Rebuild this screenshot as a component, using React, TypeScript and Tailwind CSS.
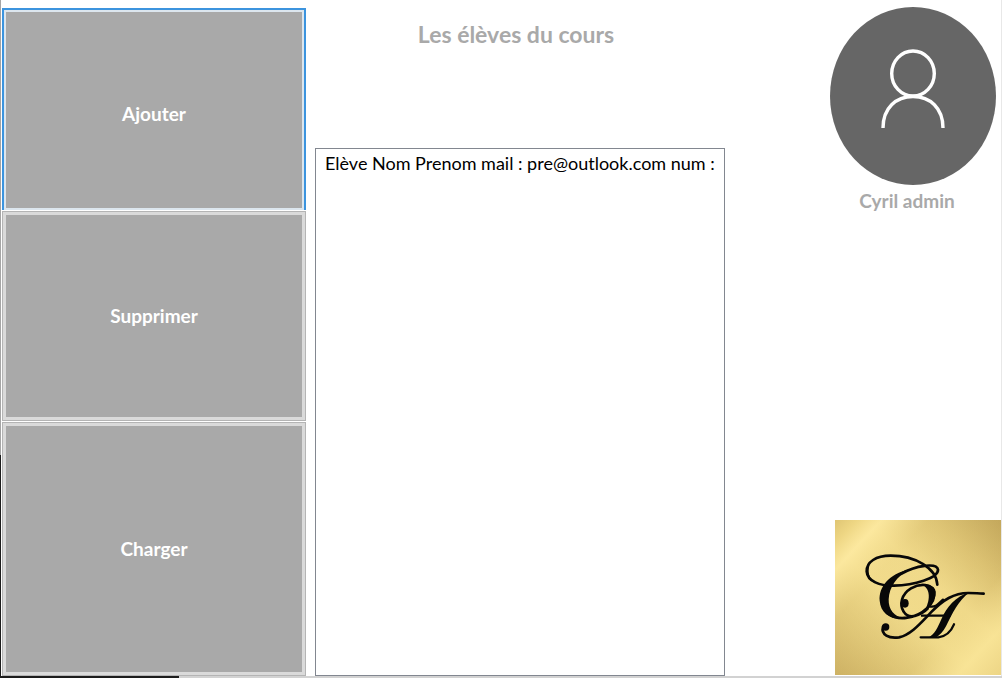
import React from "react";

const pupils = ["Elève Nom Prenom mail : pre@outlook.com num :"];

const buttonBase =
  "flex min-h-12 w-full items-center justify-center bg-[#a9a9a9] text-[19px] leading-6 font-bold text-white";

function Avatar() {
  return (
    <svg viewBox="0 0 166 178" className="block w-full" role="img" aria-label="Profil">
      <ellipse cx="83" cy="89" rx="83" ry="89" fill="#666666" />
      <g fill="none" stroke="#ffffff" strokeWidth="3.4">
        <ellipse cx="83" cy="66.5" rx="21.3" ry="22.5" />
        <path d="M53 121 C53 101 66 89.5 83 89.5 C100 89.5 113 101 113 121" />
      </g>
    </svg>
  );
}

function Monogram() {
  return (
    <svg viewBox="30 28 498 466" className="block w-full" role="img" aria-label="Logo CA">
      <defs>
        <linearGradient id="gold" gradientUnits="userSpaceOnUse" x1="50" y1="514" x2="508" y2="8">
          <stop offset="0" stopColor="#c0a255" />
          <stop offset="0.2" stopColor="#d8be6e" />
          <stop offset="0.42" stopColor="#f0da8a" />
          <stop offset="0.6" stopColor="#efd888" />
          <stop offset="0.8" stopColor="#d5ba6a" />
          <stop offset="1" stopColor="#b4964b" />
        </linearGradient>
        <linearGradient id="shine" gradientUnits="userSpaceOnUse" x1="30" y1="28" x2="528" y2="494">
          <stop offset="0" stopColor="#dfc573" />
          <stop offset="0.07" stopColor="#eed683" stopOpacity="0.9" />
          <stop offset="0.15" stopColor="#ffeca4" stopOpacity="0.8" />
          <stop offset="0.3" stopColor="#f3dd8e" stopOpacity="0.3" />
          <stop offset="0.7" stopColor="#f3dd8e" stopOpacity="0.2" />
          <stop offset="0.86" stopColor="#fbe79a" stopOpacity="0.75" />
          <stop offset="1" stopColor="#ecd484" stopOpacity="0.8" />
        </linearGradient>
      </defs>
      <rect x="30" y="28" width="498" height="466" fill="url(#gold)" />
      <rect x="30" y="28" width="498" height="466" fill="url(#shine)" />
      <g fill="none" stroke="#080808" strokeLinecap="round" strokeLinejoin="round">
        <path strokeWidth="8" d="M337 222 C334 172 270 135 197 135 C153 135 124 154 125 182 C127 212 165 226 207 225 C265 223 341 203 339 177 C336 155 272 164 227 190" />
        <path strokeWidth="8" d="M190 309 C208 322 226 325 247 321 C292 315 333 278 327 243 C321 219 285 217 258 233 C230 250 222 281 236 303 C251 328 287 315 308 294" />
        <path strokeWidth="7" d="M312 287 C330 292 341 280 354 267" />
        <path strokeWidth="8" d="M174 348 C167 373 192 384 222 380 C258 372 286 338 320 303 C354 268 386 247 430 247 Q459 247 476 249" />
        <path strokeWidth="7" d="M291 315 H374 M287 380 H340 C363 377 378 363 387 341" />
      </g>
      <g fill="#080808">
        <path d="M254 176 C190 190 161 231 164 270 C167 306 194 328 240 325 C206 317 190 297 191 266 C193 229 215 197 254 176Z" />
        <path d="M130 164 C118 188 128 208 150 218 C132 201 127 184 134 162Z" />
        <path d="M292 223 C318 234 316 271 298 302 C328 278 341 245 326 230 Q312 218 292 223Z" />
        <path d="M434 245 C400 270 382 309 363 347 Q350 372 330 382 H309 C330 370 338 351 349 326 C365 290 391 257 434 245Z" />
        <ellipse cx="240" cy="278" rx="11" ry="13" />
        <circle cx="182" cy="349" r="11" />
      </g>
    </svg>
  );
}

export default function App() {
  return (
    <div className="flex min-h-screen flex-col bg-white font-['Lato','Liberation_Sans',sans-serif]">
      <div className="flex flex-1">
        <div className="flex w-px flex-col" aria-hidden="true">
          <div className="grow-[455] bg-[#a5a5a5]" />
          <div className="grow-[221] bg-[#1c1c1c]" />
        </div>
        <main className="grid flex-1 grid-cols-[304fr_410fr_267fr] gap-x-[9px] pl-px">
          <nav className="grid grid-rows-[202fr_209fr_254fr] gap-px pt-2" aria-label="Actions">
            <button
              type="button"
              className={`${buttonBase} border-2 border-b-0 border-[#3c94de] pt-2 shadow-[inset_0_0_0_2px_#dce6ee]`}
            >
              Ajouter
            </button>
            <button
              type="button"
              className={`${buttonBase} border border-[#b4b4b4] shadow-[inset_0_0_0_3px_#dadada]`}
            >
              Supprimer
            </button>
            <button
              type="button"
              className={`${buttonBase} border border-[#b4b4b4] shadow-[inset_0_0_0_3px_#dadada]`}
            >
              Charger
            </button>
          </nav>
          <section className="flex min-w-0 flex-col">
            <h1
              id="pupils-title"
              className="h-[148px] pt-5 pr-2 text-center text-[23px] leading-7 font-bold text-[#a9a9a9]"
            >
              Les élèves du cours
            </h1>
            <select
              size={2}
              aria-labelledby="pupils-title"
              className="w-full flex-1 overflow-hidden border border-[#828790] bg-white text-lg text-black outline-none"
            >
              {pupils.map((pupil) => (
                <option key={pupil} className="px-[9px] pt-[3px] pb-0">
                  {pupil}
                </option>
              ))}
            </select>
          </section>
          <aside className="flex flex-col items-end justify-between pt-[7px] pb-px">
            <div className="mr-[5px] w-[166px]">
              <Avatar />
              <p className="mt-1 pr-3 text-center text-[19px] leading-6 font-bold text-[#a9a9a9]">
                Cyril admin
              </p>
            </div>
            <div className="w-[166px]">
              <Monogram />
            </div>
          </aside>
        </main>
        <div className="w-px bg-[#e8e8e8]" aria-hidden="true" />
      </div>
      <div className="flex h-[2px]" aria-hidden="true">
        <div className="grow-[179] bg-[#1c1c1c]" />
        <div className="grow-[823] bg-[#d2d2d2]" />
      </div>
    </div>
  );
}
